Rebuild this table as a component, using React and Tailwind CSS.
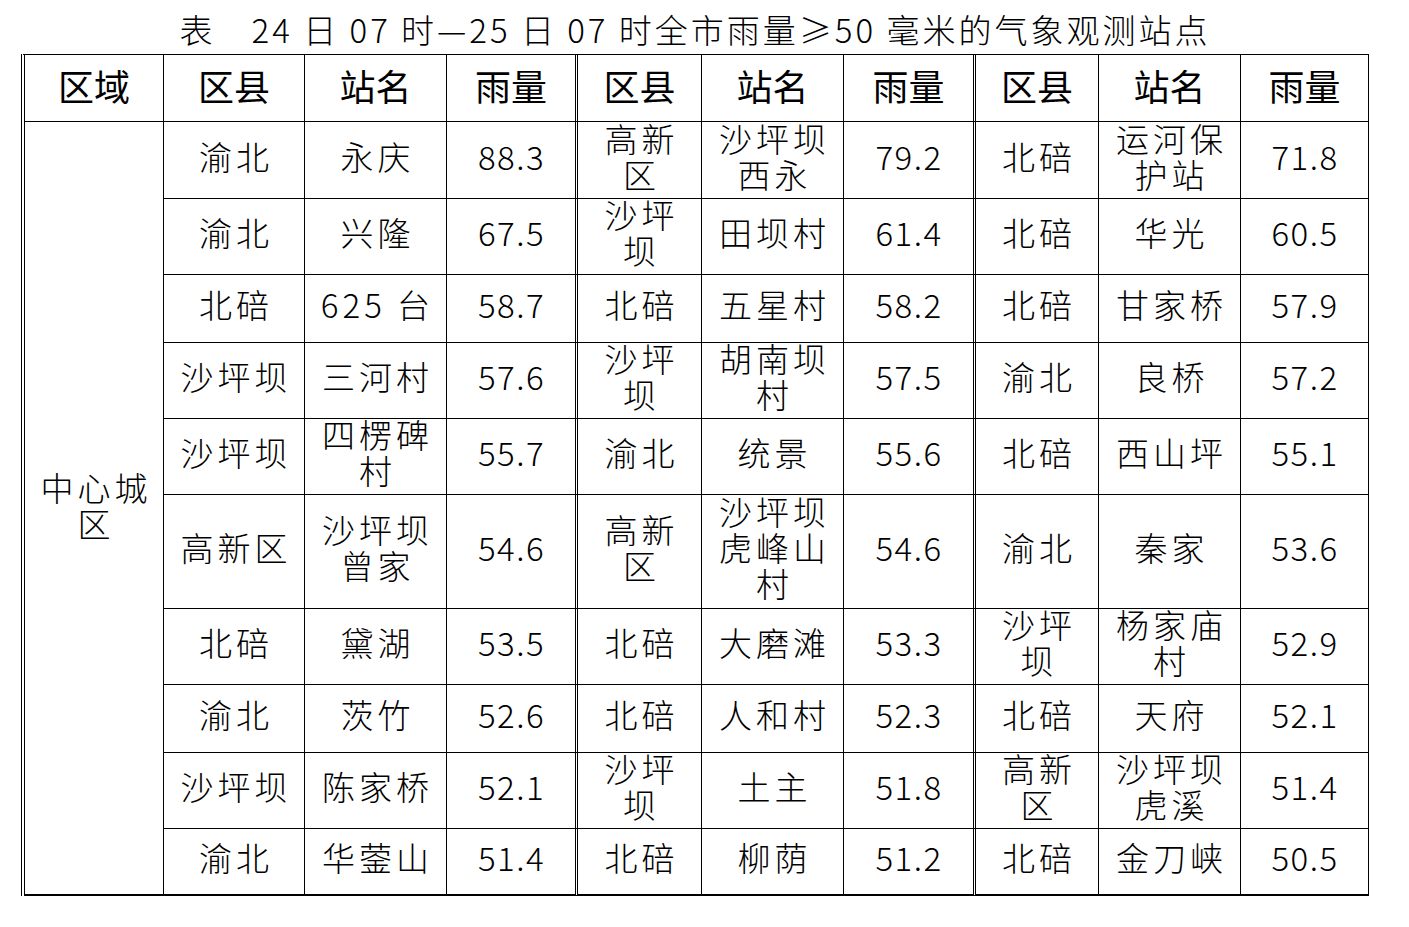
const rows = [
  [["渝北", "永庆", "88.3"], ["高新\n区", "沙坪坝\n西永", "79.2"], ["北碚", "运河保\n护站", "71.8"]],
  [["渝北", "兴隆", "67.5"], ["沙坪\n坝", "田坝村", "61.4"], ["北碚", "华光", "60.5"]],
  [["北碚", "625 台", "58.7"], ["北碚", "五星村", "58.2"], ["北碚", "甘家桥", "57.9"]],
  [["沙坪坝", "三河村", "57.6"], ["沙坪\n坝", "胡南坝\n村", "57.5"], ["渝北", "良桥", "57.2"]],
  [["沙坪坝", "四楞碑\n村", "55.7"], ["渝北", "统景", "55.6"], ["北碚", "西山坪", "55.1"]],
  [["高新区", "沙坪坝\n曾家", "54.6"], ["高新\n区", "沙坪坝\n虎峰山\n村", "54.6"], ["渝北", "秦家", "53.6"]],
  [["北碚", "黛湖", "53.5"], ["北碚", "大磨滩", "53.3"], ["沙坪\n坝", "杨家庙\n村", "52.9"]],
  [["渝北", "茨竹", "52.6"], ["北碚", "人和村", "52.3"], ["北碚", "天府", "52.1"]],
  [["沙坪坝", "陈家桥", "52.1"], ["沙坪\n坝", "土主", "51.8"], ["高新\n区", "沙坪坝\n虎溪", "51.4"]],
  [["渝北", "华蓥山", "51.4"], ["北碚", "柳荫", "51.2"], ["北碚", "金刀峡", "50.5"]],
];

const font = { fontFamily: '"Noto Sans CJK SC", "Noto Sans", sans-serif' };

function Cell({ children, last, dbl, head, num }) {
  return (
    <div
      className={`flex items-center justify-center text-center whitespace-pre-line border-black border-b border-r ${
        dbl ? "border-r-[3px] [border-right-style:double]" : ""
      } ${last ? "border-b-2" : ""} ${
        head
          ? "text-[36px] leading-none font-normal pb-[6px]"
          : num
          ? "text-[33px] leading-[36px] font-light tracking-[1.5px] pl-[1px] pb-[9px]"
          : "text-[33px] leading-[36px] font-light tracking-[4px] pl-[4px] pb-[9px]"
      }`}
    >
      {children}
    </div>
  );
}

export default function App() {
  const heads = ["区县", "站名", "雨量"];
  return (
    <div className="w-[1409px] h-[927px] bg-white text-black" style={font}>
      <div className="pl-[21px] w-[1369px]">
        <div className="h-[54px] flex items-end justify-center pb-[5px] text-[33px] leading-[40px] font-light tracking-[3px]">
          表　24 日 07 时—25 日 07 时全市雨量≥50 毫米的气象观测站点
        </div>
        <div className="grid grid-cols-[139px_141px_142px_131px_124px_142px_132px_123px_142px_128px] grid-rows-[67px_77px_76px_68px_76px_76px_114px_76px_68px_76px_67px] border-t border-l-4 border-black [border-left-style:double]">
          <Cell head>区域</Cell>
          {[0, 1, 2].map((g) =>
            heads.map((h, i) => (
              <Cell key={g + "-" + i} head dbl={i === 2 && g < 2}>
                {h}
              </Cell>
            ))
          )}
          <div className="row-span-10 flex items-center justify-center text-center border-r border-b-2 border-black text-[33px] leading-[36px] font-light tracking-[4px] pl-[4px] pb-[6px] whitespace-pre-line">
            {"中心城\n区"}
          </div>
          {rows.map((r, ri) =>
            r.map((grp, g) =>
              grp.map((v, i) => (
                <Cell key={ri + "-" + g + "-" + i} num={i === 2} dbl={i === 2 && g < 2} last={ri === rows.length - 1}>
                  {v}
                </Cell>
              ))
            )
          )}
        </div>
      </div>
    </div>
  );
}
